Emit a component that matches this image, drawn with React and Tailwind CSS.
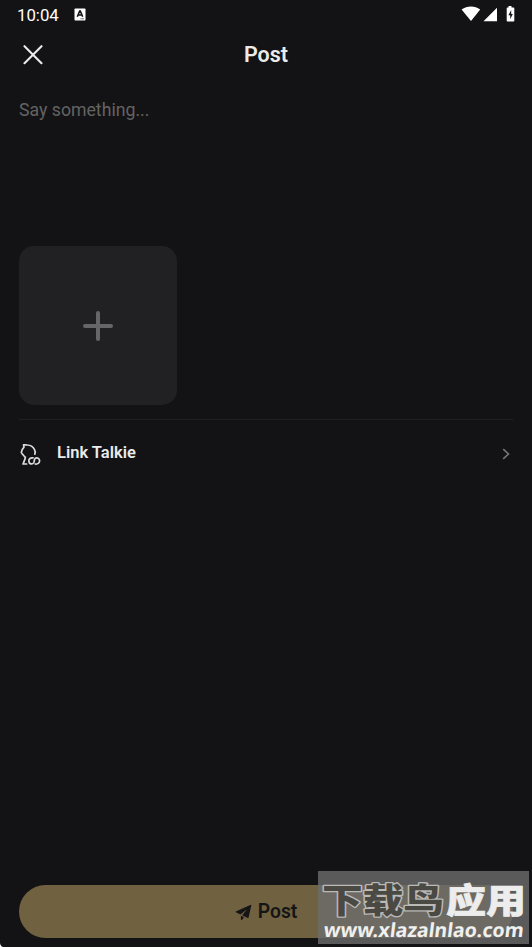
const StatusBar = () => (
  <div className="flex h-[30px] items-center pl-[17px] pr-[17px] text-white">
    <span className="w-[57px] text-[16.8px] leading-[30px]">10:04</span>
    <svg width="12" height="13" viewBox="0 0 12 13" className="-mt-[2px]">
      <rect x="0.5" y="0.5" width="11" height="12" rx="0.8" fill="#fff" />
      <path d="M3.300 8.800 5.700 3h.6L8.700 8.800M4.300 7h3.400" fill="none" stroke="#131315" strokeWidth="1.600" />
      <path d="M6.500 10.800h3.500" stroke="#131315" strokeWidth="0.8" strokeDasharray="1 .4" />
    </svg>
    <svg width="54" height="18" viewBox="0 0 54 18" className="-mt-[2px] ml-auto" fill="#fff">
      <path d="M.6 4.500C6 .6 14 .6 19.200 4.500L10 16z" />
      <path d="M36 2.800v13.500H22.500z" />
      <path d="M47.500 1h3v1.500h2a.8.8 0 0 1 .8.8v12.400a.8.8 0 0 1-.8.8h-6a.8.8 0 0 1-.8-.8V3.300a.8.8 0 0 1 .8-.8h1z" />
      <path d="M50.200 5 47.400 10.200h1.800v4l2.600-5.200h-1.600z" fill="#131315" />
    </svg>
  </div>
);

const Header = () => (
  <header className="grid h-[50px] grid-cols-[60px_1fr_60px] items-center text-[#ebebeb]">
    <button className="ml-[23px] w-[20px]">
      <svg width="20" height="20" viewBox="0 0 20 20" fill="none" stroke="currentColor" strokeWidth="2.100" strokeLinecap="round">
        <path d="M1.500 1.200l17 17M18.500 1.200l-17 17" />
      </svg>
    </button>
    <h1 className="text-center text-[21.5px] font-semibold">Post</h1>
  </header>
);

const TalkieIcon = () => (
  <svg width="22" height="23" viewBox="0 0 22 23" fill="none" stroke="#dcdcdc" strokeWidth="1.700" strokeLinecap="round" strokeLinejoin="round">
    <path d="M15.800 11.200c.6-1.400.5-3.400-.5-5C13.800 3.500 11.200 2.200 8.300 2 7 1.800 5.500 2 4.500 1.800L5 4.200C3.700 5.600 2.400 7.600 2.300 9.400c.3 1.300 1.700 2 2.300 3 .5.900.8 1.400 1.800 1.800-.3 2.400-1.300 4.300-2.400 6.800h3.600" />
    <path d="M14 14.900c-2.500-.4-4.300 1-4.200 3.200.2 3 3.600 3.800 5 1.500.8-1.400.1-3.200 1.400-4.300 1.900-1.300 4.500.1 4.400 2.500-.1 2.300-2 3.600-4.400 3.200" />
  </svg>
);

const Watermark = () => (
  <svg width="211" height="73" viewBox="318 871 211 73" className="absolute bottom-[3px] left-[318px] bg-[#6d6d6d]/80">
    <g className="font-['Noto_Sans_CJK_SC',sans-serif] text-[34px] font-black" strokeLinejoin="round">
      <text x="322" y="913" textLength="122" lengthAdjust="spacingAndGlyphs" fill="#4b4943" stroke="#bab9b5" strokeWidth="2.600" paintOrder="stroke">下载鸟</text>
      <text x="446" y="913" textLength="80" lengthAdjust="spacingAndGlyphs" fill="#ededed" stroke="#ededed" strokeWidth="0.600">应用</text>
    </g>
    <g transform="translate(323 937) skewX(-7)">
      <text x="0" y="0" textLength="200" lengthAdjust="spacingAndGlyphs" fill="#f0f0ee" className="font-['Noto_Sans',sans-serif] text-[19.5px] font-bold">www.xlazalnlao.com</text>
    </g>
  </svg>
);

export default function App() {
  return (
    <div className="relative flex h-[947px] w-[532px] flex-col overflow-hidden bg-[#131315] font-[Roboto,sans-serif]">
      <StatusBar />
      <Header />
      <main className="flex flex-1 flex-col px-[19px]">
        <p className="h-[166px] pt-[18px] text-[17.7px] leading-6 text-[#636363]">Say something...</p>
        <button className="flex h-[159px] w-[158px] items-center justify-center rounded-[15px] bg-[#212123]">
          <svg width="30" height="30" viewBox="0 0 30 30" stroke="#666" strokeWidth="4" strokeLinecap="round">
            <path d="M15 2v26M2 15h26" />
          </svg>
        </button>
        <div className="mt-[14px] flex h-[70px] items-center border-t border-[#202022]">
          <TalkieIcon />
          <span className="-mt-[3px] ml-[16px] text-[16.5px] font-semibold text-[#ebebeb]">Link Talkie</span>
          <svg width="8" height="12" viewBox="0 0 8 12" className="-mt-px mr-[3px] ml-auto" fill="none" stroke="#777" strokeWidth="1.600">
            <path d="M1.200 1.200 6.500 6l-5.300 4.800" />
          </svg>
        </div>
        <button className="mt-auto mb-[9px] flex h-[53px] items-center justify-center gap-[6px] rounded-full bg-[#706140] pt-px text-[19.3px] font-semibold text-[#151517]">
          <svg width="17" height="17" viewBox="0 0 17 17" fill="currentColor">
            <path d="M15.800.8.800 7.400c-.4.300-.3.700.1.900l4.500 2.300L12 5.200 7.200 11.300l5.600 2.700c.4.100.7-.1.800-.5L16.300 1.300c0-.4-.2-.6-.5-.5zM5.900 11.700l3.200 1.500-2.300 2.700c-.4.400-.9.200-.9-.3z" />
          </svg>
          Post
        </button>
      </main>
      <Watermark />
      <svg width="3" height="4" viewBox="0 0 3 4" className="absolute bottom-0 left-0" fill="#fff">
        <path d="M0 0C.3 2 1.200 3.400 3 4H0z" />
      </svg>
    </div>
  );
}
